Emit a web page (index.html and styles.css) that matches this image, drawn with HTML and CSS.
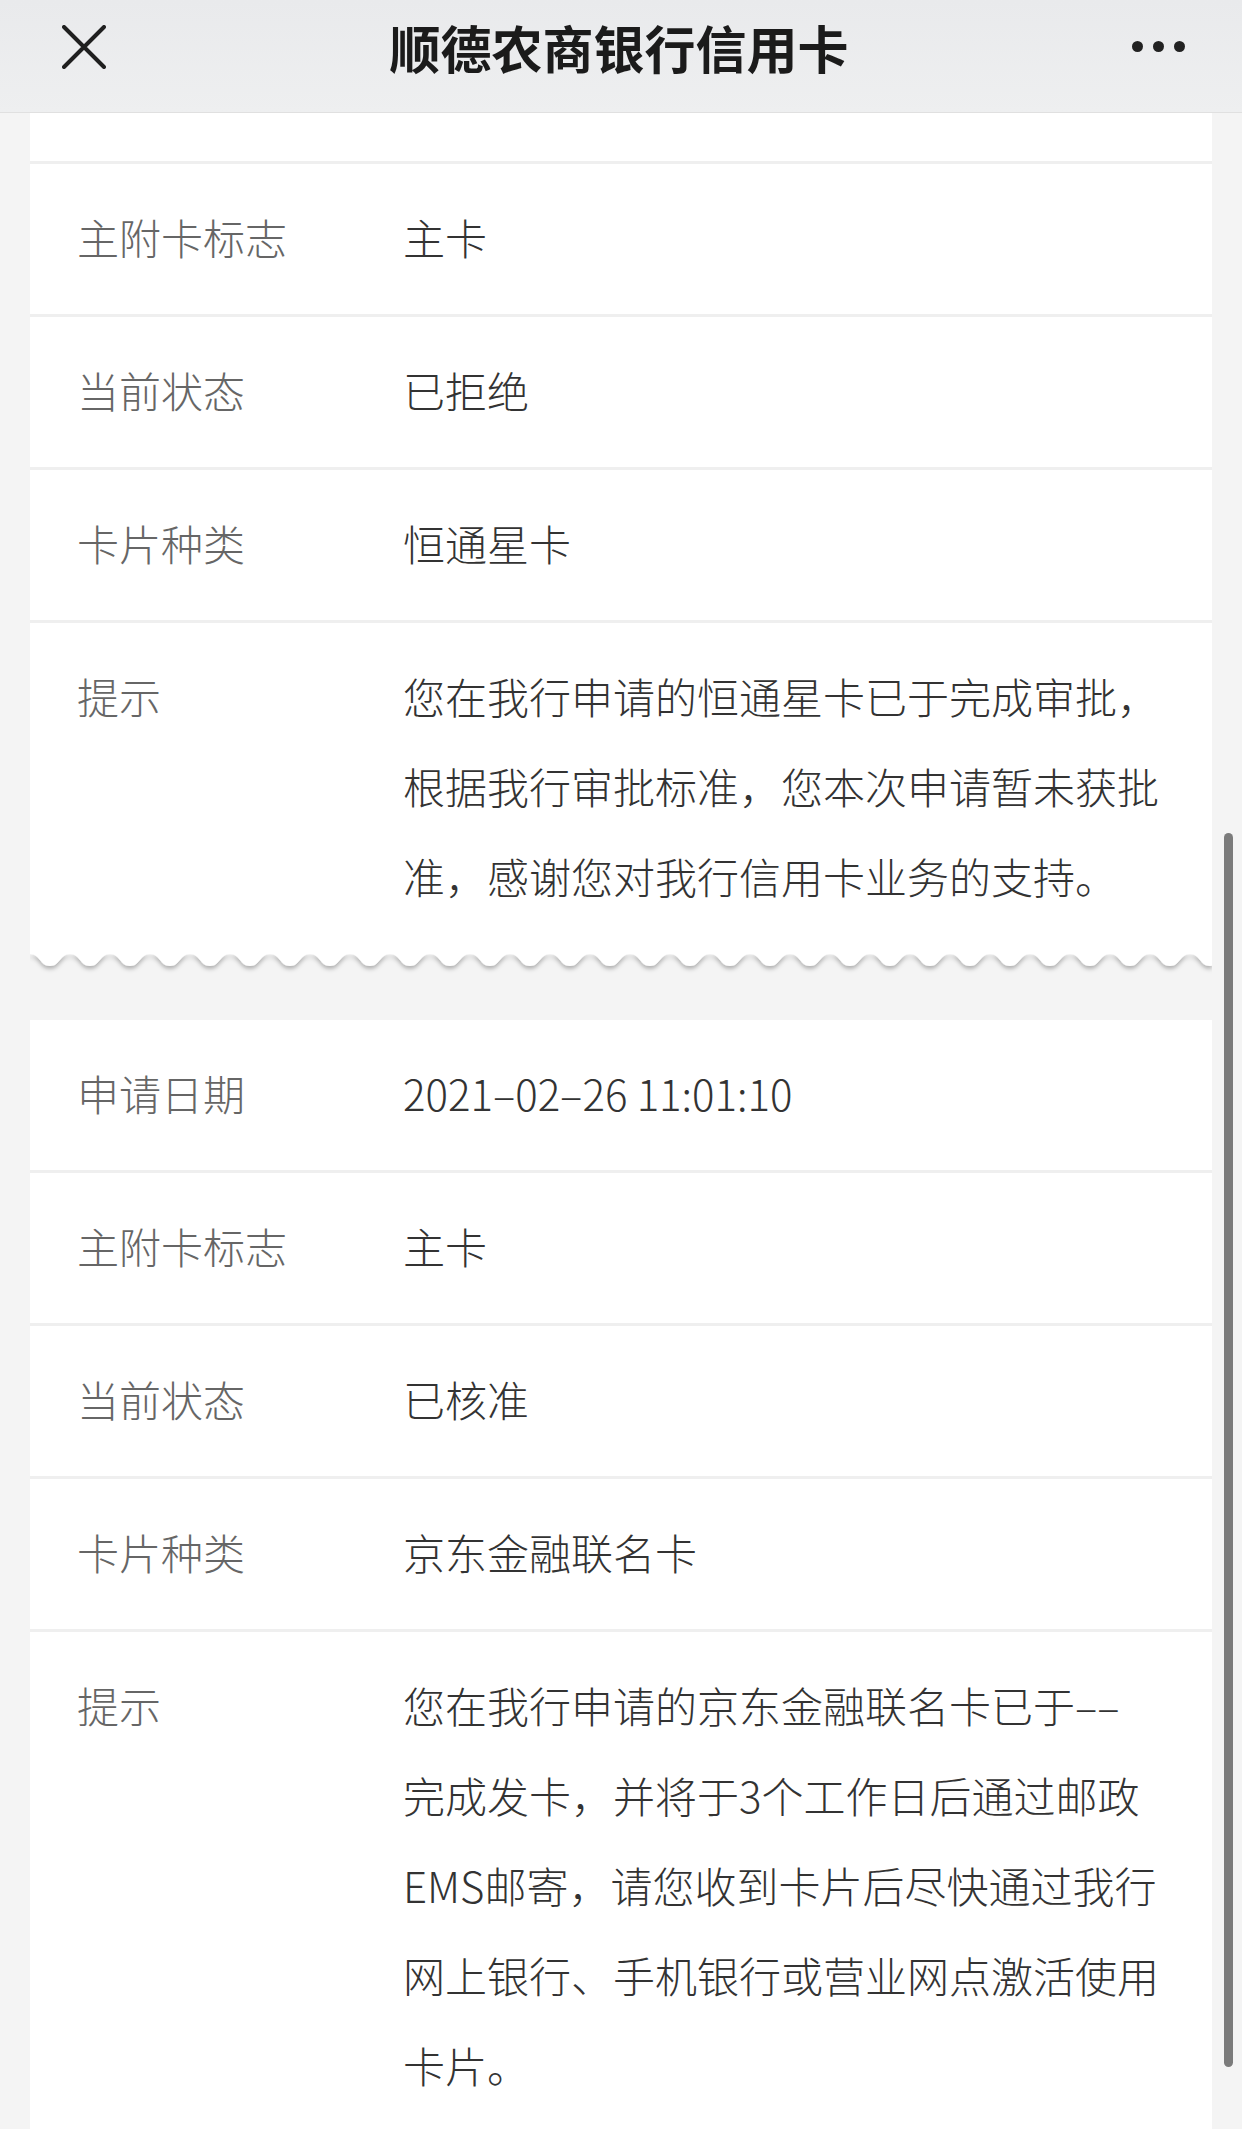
FILE: index.html
```html
<!DOCTYPE html>
<html lang="zh-CN">
<head>
  <meta charset="UTF-8" />
  <meta name="viewport" content="width=device-width, initial-scale=1.0"/>
  <title>顺德农商银行信用卡</title>
  <link rel="stylesheet" href="styles.css">
</head>
<body>

  <header class="nav-bar">
    <span class="nav-close">
      <svg width="44" height="44" viewBox="0 0 44 44">
        <path d="M2 2 L42 42 M42 2 L2 42" stroke="#1f1f1f" stroke-width="4" stroke-linecap="round" fill="none"/>
      </svg>
    </span>
    <h1 class="nav-title">顺德农商银行信用卡</h1>
    <span class="nav-more">
      <i></i><i></i><i></i>
    </span>
  </header>

  <main class="content">

    <!-- first application, scrolled partly out of view -->
    <section class="card">
      <div class="row row-clipped"></div>
      <div class="row">
        <span class="row-label">主附卡标志</span>
        <span class="row-value">主卡</span>
      </div>
      <div class="row">
        <span class="row-label">当前状态</span>
        <span class="row-value">已拒绝</span>
      </div>
      <div class="row">
        <span class="row-label">卡片种类</span>
        <span class="row-value">恒通星卡</span>
      </div>
      <div class="row">
        <span class="row-label">提示</span>
        <span class="row-value">您在我行申请的恒通星卡已于完成审批，<br>根据我行审批标准，您本次申请暂未获批<br>准，感谢您对我行信用卡业务的支持。</span>
      </div>
    </section>
    <svg class="wave" width="1182" height="24" viewBox="0 0 1182 24">
      <defs>
        <filter id="waveShadow" x="-5%" y="-50%" width="110%" height="250%">
          <feDropShadow dx="0" dy="3" stdDeviation="2" flood-color="#000" flood-opacity="0.28"/>
        </filter>
        <pattern id="wavePattern" width="40" height="24" patternUnits="userSpaceOnUse">
          <path d="M0 0 H40 V1 C30 1 30 13 20 13 C10 13 10 1 0 1 Z" fill="#fff"/>
        </pattern>
      </defs>
      <rect x="0" y="0" width="1182" height="24" fill="url(#wavePattern)" filter="url(#waveShadow)"/>
    </svg>

    <section class="card">
      <div class="row">
        <span class="row-label">申请日期</span>
        <span class="row-value">2021–02–26 11:01:10</span>
      </div>
      <div class="row">
        <span class="row-label">主附卡标志</span>
        <span class="row-value">主卡</span>
      </div>
      <div class="row">
        <span class="row-label">当前状态</span>
        <span class="row-value">已核准</span>
      </div>
      <div class="row">
        <span class="row-label">卡片种类</span>
        <span class="row-value">京东金融联名卡</span>
      </div>
      <div class="row">
        <span class="row-label">提示</span>
        <span class="row-value">您在我行申请的京东金融联名卡已于––<br>完成发卡，并将于3个工作日后通过邮政<br>EMS邮寄，请您收到卡片后尽快通过我行<br>网上银行、手机银行或营业网点激活使用<br>卡片。</span>
      </div>
    </section>

  </main>

  <div class="scroll-thumb"></div>

</body>
</html>
```

FILE: styles.css
```css
html,
body {
  margin: 0;
  height: 100vh;
  overflow: hidden;
}

body {
  font-family: "Noto Sans CJK SC", "Noto Sans", sans-serif;
  background-color: #f4f4f4;
  color: #333;
}

.nav-bar {
  display: flex;
  align-items: center;
  justify-content: space-between;
  height: 93px;
  padding: 0 57px 20px 62px;
  background: linear-gradient(#e9eaec, #eeeff0);
  box-shadow: inset 0 -1px 0 #e0e0e0;
  box-sizing: content-box;
}

.nav-close {
  display: flex;
  width: 44px;
  height: 44px;
}

.nav-title {
  margin: 0;
  font-size: 51px;
  font-weight: 700;
  color: #1b1b1b;
}

.nav-more {
  display: flex;
  gap: 10px;
}

.nav-more i {
  width: 11px;
  height: 11px;
  border-radius: 50%;
  background-color: #222;
}

.content {
  padding: 0 30px;
}

.card {
  display: flex;
  flex-direction: column;
  gap: 3px;
  background-color: #efefef;
}

.row {
  display: flex;
  padding: 28px 0 32px 47px;
  background-color: #fff;
  font-size: 42px;
  font-weight: 300;
  line-height: 90px;
}

.row-clipped {
  height: 48px;
  padding: 0;
}

.row-label {
  flex: 0 0 326px;
  color: #666;
}

.row-value {
  color: #333;
}

.wave {
  display: block;
  margin-bottom: 43px;
}

.scroll-thumb {
  position: fixed;
  left: 1224px;
  top: 833px;
  width: 9px;
  height: 1234px;
  border-radius: 5px;
  background-color: #7b7b7b;
}
```
